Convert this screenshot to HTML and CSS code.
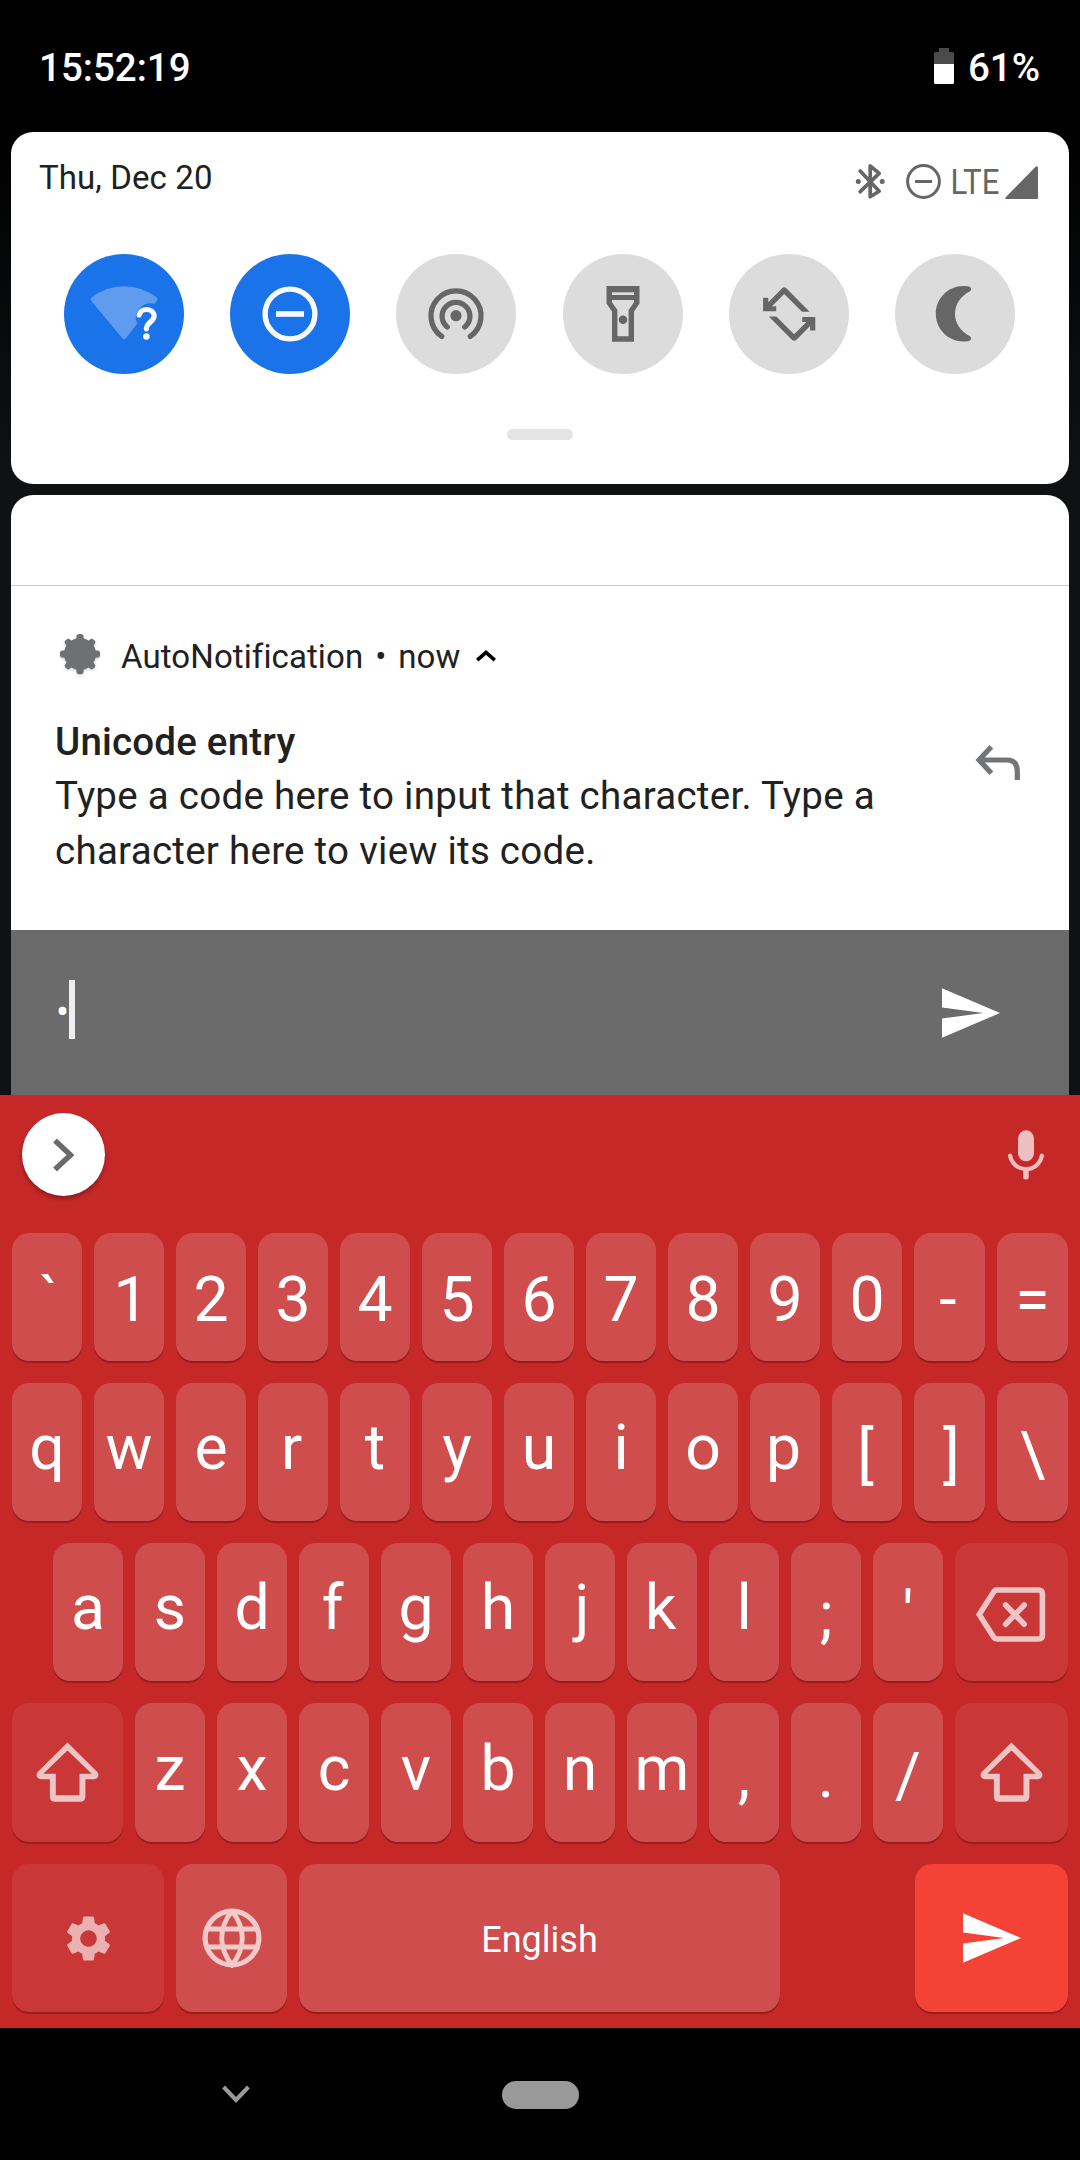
FILE: index.html
```html
<!DOCTYPE html>
<html lang="en">
<head>
<meta charset="utf-8">
<title>Notification shade</title>
<link rel="stylesheet" href="styles.css">
</head>
<body>
<svg class="defs" width="0" height="0">
  <symbol id="send" viewBox="2 3 21 18"><path fill="currentColor" d="M2.01 21L23 12 2.01 3 2 10l15 2-15 2z"/></symbol>
  <symbol id="shift" viewBox="0 0 63 61"><path fill="currentColor" fill-rule="evenodd" d="M31.5.6L61.3 30Q63 32.4 62 34.9Q60.6 37.3 57.5 37.3H49.4V54.5Q49.2 59.7 44 59.8H19Q14 59.7 13.9 54.5V37.3H5.5Q2.4 37.3 1 34.9Q0 32.4 1.7 30ZM31.5 8.6L7.3 31.8H19.8V53.2H43.5V31.8H55.7Z"/></symbol>
</svg>
<div class="screen">
  <header class="status">
    <span class="clock">15:52:19</span>
    <span class="power">
      <svg width="20" height="36" viewBox="0 0 20 36"><path fill="#4b4b4b" d="M5 0H15V4H18.5Q20 4 20 5.500V20H0V5.500Q0 4 1.500 4H5Z"/><path fill="#fff" d="M0 16H20V34.500Q20 36 18.500 36H1.500Q0 36 0 34.500Z"/></svg>
      <span>61%</span>
    </span>
  </header>

  <main class="shade">
    <section class="quick">
      <div class="quick-top">
        <span class="date">Thu, Dec 20</span>
        <div class="indicators">
          <svg class="bt" width="31" height="37" viewBox="0 0 31 37"><path d="M5.200 8L24.200 28.200L15.200 33.800V2.800L24.200 10.300L5.200 28.700" fill="none" stroke="currentColor" stroke-width="3.700" stroke-linecap="round" stroke-linejoin="round"/><circle cx="3.300" cy="18.400" r="2.500" fill="currentColor"/><circle cx="27.200" cy="18.400" r="2.500" fill="currentColor"/></svg>
          <svg class="dnd" width="35" height="35" viewBox="0 0 35 35"><circle cx="17.500" cy="17.500" r="15.900" fill="none" stroke="currentColor" stroke-width="3"/><path d="M9 16H26V19H9Z" fill="currentColor"/></svg>
          <svg class="lte" width="46" height="35" viewBox="0 0 46 35"><text x="-1.500" y="29.500" textLength="49" lengthAdjust="spacingAndGlyphs">LTE</text></svg>
          <svg width="33" height="33" viewBox="0 0 33 33"><path fill="currentColor" d="M30.600.8Q33-1 33 2V32Q33 33 32 33H1.500Q-.6 33 .7 31.200Z"/></svg>
        </div>
      </div>
      <div class="tiles">
        <div class="tile on"><svg viewBox="0 0 66 66"><path fill="#5f9cef" d="M31.600 57.500L.1 19.700Q-1 18 .6 16.400Q15 5.200 33 5.200T65.800 16.400Q67.300 18 66 19.700L63.600 22.700A15.500 14.500 0 0 0 46.200 42.800L34.600 57.500Q33 59.200 31.600 57.500Z"/><path fill="none" stroke="#f8fafd" stroke-width="5.200" stroke-linecap="round" d="M48.200 34A7.600 6.800 0 0 1 63.200 34.500C63.200 41 55.400 41 55.400 47.800"/><circle cx="55.400" cy="55.500" r="3.300" fill="#f8fafd"/></svg></div>
        <div class="tile on"><svg viewBox="0 0 66 66"><circle cx="33" cy="33" r="24.900" fill="none" stroke="#f8fafd" stroke-width="5.400"/><path fill="#f8fafd" d="M19 30.200H47V35.800H19Z"/></svg></div>
        <div class="tile"><svg viewBox="0 0 66 66"><circle cx="33" cy="34.700" r="5.600" fill="currentColor"/><path fill="none" stroke="currentColor" stroke-width="5.300" stroke-linecap="round" d="M24.200 46A13.900 13.900 0 1 1 41.800 46M18.700 55.400A25 25 0 1 1 47.300 55.400"/></svg></div>
        <div class="tile"><svg viewBox="0 0 66 66"><path fill="currentColor" fill-rule="evenodd" d="M16.500 5H49.500V22.400L44 30.500V60.700H22V30.500L16.500 22.400ZM22 11.300V14H44V11.300ZM22 19V21.300L27.400 29V55.200H38.600V29L44 21.300V19Z"/><circle cx="33" cy="38.700" r="4.300" fill="currentColor"/></svg></div>
        <div class="tile"><svg viewBox="0 0 66 66"><g fill="currentColor"><path d="M53.600 30.700L30.600 7.400Q28.200 5.300 25.900 7.400L12.300 21.300V16.700H7.100V30.200H20.200V25.200H16L28.200 13L46 30.700Z"/><path transform="rotate(180 33.200 33.100)" d="M53.600 30.700L30.600 7.400Q28.200 5.300 25.900 7.400L12.300 21.300V16.700H7.100V30.200H20.200V25.200H16L28.200 13L46 30.700Z"/></g></svg></div>
        <div class="tile"><svg viewBox="0 0 66 66"><path fill="currentColor" d="M41.500 5C26 5 13.800 17.500 13.800 32.800S26 60.500 41.500 60.500L46.500 60.200Q51 58.300 48 55.300C38 50 33 42 33 32.800S38 15.500 48 10.200Q51 7.200 46.500 5.300Z"/></svg></div>
      </div>
      <div class="grip"></div>
    </section>

    <section class="notes">
      <div class="note-gap"></div>
      <article class="note">
        <div class="note-head">
          <svg class="app" width="42" height="44" viewBox="-21 -21 42 44"><g fill="#6f7072"><circle r="16"/><rect x="-3.500" y="-20" width="7" height="40" rx="2.800"/><rect x="-20" y="-3.500" width="40" height="7" rx="2.800"/><rect x="-3.300" y="-19.800" width="6.600" height="39.600" rx="2.800" transform="rotate(45)"/><rect x="-3.300" y="-19.800" width="6.600" height="39.600" rx="2.800" transform="rotate(-45)"/></g></svg>
          <span class="name">AutoNotification</span><span class="sep">•</span><span>now</span>
          <svg class="fold" width="20" height="12" viewBox="0 0 20 12"><path d="M1.200 10.200L10 2.400L18.800 10.200" fill="none" stroke="#000" stroke-width="3.600"/></svg>
        </div>
        <div class="note-body">
          <div class="copy">
            <h1>Unicode entry</h1>
            <p>Type a code here to input that character. Type a character here to view its code.</p>
          </div>
          <svg class="reply" width="46" height="37" viewBox="0 0 46 37"><path d="M16.400 2.800L4 16L16.400 29.200M4 16H31.500Q42.300 16 42.300 27V36" fill="none" stroke="#737476" stroke-width="5.200"/></svg>
        </div>
      </article>
      <div class="entry">
        <span class="typed">•</span><span class="caret"></span>
        <svg class="send" width="58" height="50"><use href="#send"/></svg>
      </div>
    </section>
  </main>

  <section class="keyboard">
    <div class="strip">
      <div class="expand"><svg width="22" height="34" viewBox="0 0 22 34"><path d="M2 2.500L17.500 17L2 31.500" fill="none" stroke="#696a69" stroke-width="5.400"/></svg></div>
      <svg class="mic" width="38" height="52" viewBox="0 0 38 52"><g fill="#efbfbf"><rect x="11" y="1.300" width="16" height="31" rx="8"/><rect x="16.200" y="39" width="5.500" height="11.500" rx="2.200"/></g><path d="M3.100 26.700C4.500 34.500 11 40 19 40S33.500 34.500 34.900 26.700" fill="none" stroke="#efbfbf" stroke-width="4.200" stroke-linecap="round"/></svg>
    </div>
    <div class="row nums">
      <div class="key sym right">`</div><div class="key right">1</div><div class="key">2</div><div class="key">3</div><div class="key">4</div><div class="key">5</div><div class="key">6</div><div class="key">7</div><div class="key">8</div><div class="key">9</div><div class="key">0</div><div class="key sym wide left">-</div><div class="key sym wide">=</div>
    </div>
    <div class="row">
      <div class="key">q</div><div class="key">w</div><div class="key">e</div><div class="key left">r</div><div class="key">t</div><div class="key">y</div><div class="key">u</div><div class="key">i</div><div class="key">o</div><div class="key left">p</div><div class="key sym left">[</div><div class="key sym wide right">]</div><div class="key sym wide">\</div>
    </div>
    <div class="row inset">
      <div class="key">a</div><div class="key">s</div><div class="key">d</div><div class="key left">f</div><div class="key">g</div><div class="key">h</div><div class="key right">j</div><div class="key left">k</div><div class="key">l</div><div class="key sym">;</div><div class="key sym">'</div>
      <div class="key fn grow"><svg class="back" width="72" height="57" viewBox="0 0 72 57" fill="none" stroke="currentColor" stroke-width="5.600" stroke-linecap="round"><path d="M20.500 4H63.500Q67.400 4 67.400 8V49Q67.400 53 63.500 53H22.500Q20 53 18.600 51L4.200 28.500L18.600 6Q20 4 22.500 4"/><path d="M30.600 19L49.200 38.300M49.200 19L30.600 38.300"/></svg></div>
    </div>
    <div class="row tall">
      <div class="key fn shift"><svg width="63" height="61"><use href="#shift"/></svg></div>
      <div class="key">z</div><div class="key">x</div><div class="key">c</div><div class="key">v</div><div class="key">b</div><div class="key">n</div><div class="key">m</div><div class="key sym">,</div><div class="key sym">.</div><div class="key sym">/</div>
      <div class="key fn grow"><svg width="63" height="61"><use href="#shift"/></svg></div>
    </div>
    <div class="row last">
      <div class="key fn prefs"><svg width="55" height="55" viewBox="0 0 24 24"><path fill="#ebb0b1" d="M19.140 12.940c.04-.3.06-.61.06-.94 0-.32-.02-.64-.07-.94l2.030-1.580c.18-.14.23-.41.12-.61l-1.920-3.320c-.12-.22-.37-.29-.59-.22l-2.390.96c-.5-.38-1.030-.7-1.620-.94l-.36-2.540c-.04-.24-.24-.41-.48-.41h-3.840c-.24 0-.43.17-.47.41l-.36 2.540c-.59.24-1.130.57-1.620.94l-2.390-.96c-.22-.08-.47 0-.59.22L2.740 8.870c-.12.21-.08.47.12.61l2.030 1.580c-.05.3-.09.63-.09.94s.02.64.07.94l-2.030 1.580c-.18.14-.23.41-.12.61l1.920 3.320c.12.22.37.29.59.22l2.390-.96c.5.38 1.030.7 1.620.94l.36 2.540c.05.24.24.41.48.41h3.840c.24 0 .44-.17.47-.41l.36-2.540c.59-.24 1.130-.56 1.620-.94l2.390.96c.22.08.47 0 .59-.22l1.920-3.320c.12-.22.07-.47-.12-.61l-2.010-1.580zM12 15.600c-1.980 0-3.600-1.620-3.600-3.600s1.620-3.600 3.600-3.600 3.600 1.620 3.600 3.600-1.620 3.600-3.600 3.600z"/></svg></div>
      <div class="key globe"><svg width="60" height="60" viewBox="-30 -30 60 60" fill="none" stroke="#f3caca"><circle r="26.900" stroke-width="5.200"/><path stroke-width="4.900" d="M-25.500 -9H25.500M-25.500 9H25.500M0 -27C-13.700 -10 -13.700 10 0 27C13.700 10 13.700 -10 0 -27"/></svg></div>
      <div class="key space">English</div>
      <div class="key go"><svg width="58" height="50"><use href="#send"/></svg></div>
    </div>
  </section>

  <nav class="navbar">
    <svg width="28" height="18" viewBox="0 0 28 18"><path d="M1.600 2L14 15L26.400 2" fill="none" stroke="#9a9a9a" stroke-width="4"/></svg>
    <div class="home"></div>
  </nav>
</div>
</body>
</html>
```
FILE: styles.css
```css
* { box-sizing: border-box; }
body { margin: 0; background: #000; font-family: Roboto, "Liberation Sans", sans-serif; }
svg { display: block; flex: none; }
.defs { position: absolute; }
.screen { width: 1080px; height: 2160px; display: flex; flex-direction: column; overflow: hidden; background: #000; }

.status { height: 132px; padding: 48px 40px 0 39px; display: flex; justify-content: space-between; align-items: flex-start; color: #fff; font-size: 38.5px; font-weight: 500; line-height: 40px; }
.power { display: flex; gap: 14px; }

.shade { height: 963px; padding: 0 11px; display: flex; flex-direction: column; gap: 11px; background: linear-gradient(#000, #0f1113 340px); }
.quick { height: 352px; border-radius: 22px; background: #fff; color: #666; }
.quick-top { display: flex; justify-content: space-between; padding: 26px 31px 0 28px; height: 122px; }
.date { font-size: 33px; line-height: 40px; letter-spacing: .1px; color: #212121; }
.indicators { display: flex; align-items: flex-start; padding-top: 6px; }
.bt { margin-right: 20px; margin-top: -1px; }
.dnd { margin-right: 11px; }
.lte { margin-right: 7px; overflow: visible; font-size: 34.5px; fill: #666; }
.indicators svg:last-child { margin-top: 2px; }
.tiles { display: flex; justify-content: space-between; padding: 0 54px 0 53px; }
.tile { width: 120px; height: 120px; border-radius: 50%; background: #dcdcdc; display: flex; align-items: center; justify-content: center; }
.tile.on { background: #1a73e8; }
.tile svg { width: 66px; height: 66px; overflow: visible; }
.grip { width: 66px; height: 11px; border-radius: 6px; background: #e4e4e4; margin: 55px auto 0; }

.notes { flex: 1; display: flex; flex-direction: column; border-radius: 22px 22px 0 0; background: #fff; color: #212121; overflow: hidden; }
.note-gap { height: 91px; border-bottom: 1px solid #c8c8c8; }
.note { height: 344px; padding: 47px 48px 0 44px; }
.note-head { display: flex; font-size: 33px; line-height: 48px; align-items: flex-start; }
.app { margin-left: 4px; margin-right: 20px; filter: drop-shadow(0 1.5px 1px rgba(0, 0, 0, .25)); }
.name { letter-spacing: .1px; }
.sep { margin: 0 12px; }
.fold { margin: 17px 0 0 16px; }
.note-body { display: flex; justify-content: space-between; padding-top: 34px; }
.copy { width: 860px; }
.copy h1 { margin: 0; font-size: 38.5px; font-weight: 500; line-height: 54px; letter-spacing: .2px; }
.copy p { margin: -1px 0 0; font-size: 38.5px; line-height: 55px; letter-spacing: .27px; }
.reply { margin-top: 29px; }
.entry { height: 165px; background: #6b6b6b; display: flex; color: #fff; padding: 50px 69px 0 44px; font-size: 38.5px; line-height: 56px; }
.typed { padding: 4px 0 0 1px; }
.caret { width: 6px; height: 59px; background: #eee; }
.entry .send { margin: 8px 0 0 auto; }

.keyboard { height: 933px; background: #c62828; color: #fff; }
.strip { height: 138px; padding: 18px 35px 0 22px; display: flex; justify-content: space-between; }
.expand { width: 83px; height: 83px; border-radius: 50%; background: #fff; display: flex; align-items: center; justify-content: center; box-shadow: 0 3px 4px rgba(0, 0, 0, .3); }
.mic { margin-top: 16px; }
.row { display: flex; gap: 12px; padding: 0 12px; height: 138px; margin-bottom: 22px; }
.nums { height: 128px; }
.inset { padding-left: 53px; }
.tall { height: 139px; }
.last { height: 148px; }
.key { width: 70px; padding-bottom: 8px; border-radius: 17px; background: #d04d4d; box-shadow: 0 2px 0 #951e1e; display: flex; align-items: center; justify-content: center; font-size: 62.5px; line-height: 74px; }
.nums .key { padding: 6px 0 0; }
.key.sym { padding: 6px 0 0; }
.key.wide { width: 71px; }
.row .key.right { padding-left: 4px; }
.row .key.left { padding-right: 3px; }
.key.fn { background: #ca3737; color: #f0c3c4; padding: 0; }
.key.grow { flex: 1; }
.back { margin: 4px 2px 0 0; }
.key.shift { width: 111px; }
.key.prefs { width: 152px; }
.key.globe { width: 111px; padding: 0; }
.key.space { width: 481px; font-size: 36px; padding: 4px 0 0; }
.key.go { width: 153px; margin-left: auto; background: #f44336; padding: 0; }

.navbar { flex: 1; display: flex; padding: 53px 0 0 222px; }
.navbar svg { margin: 4px 252px 0 0; }
.home { width: 77px; height: 28px; border-radius: 14px; background: #999; }
```
